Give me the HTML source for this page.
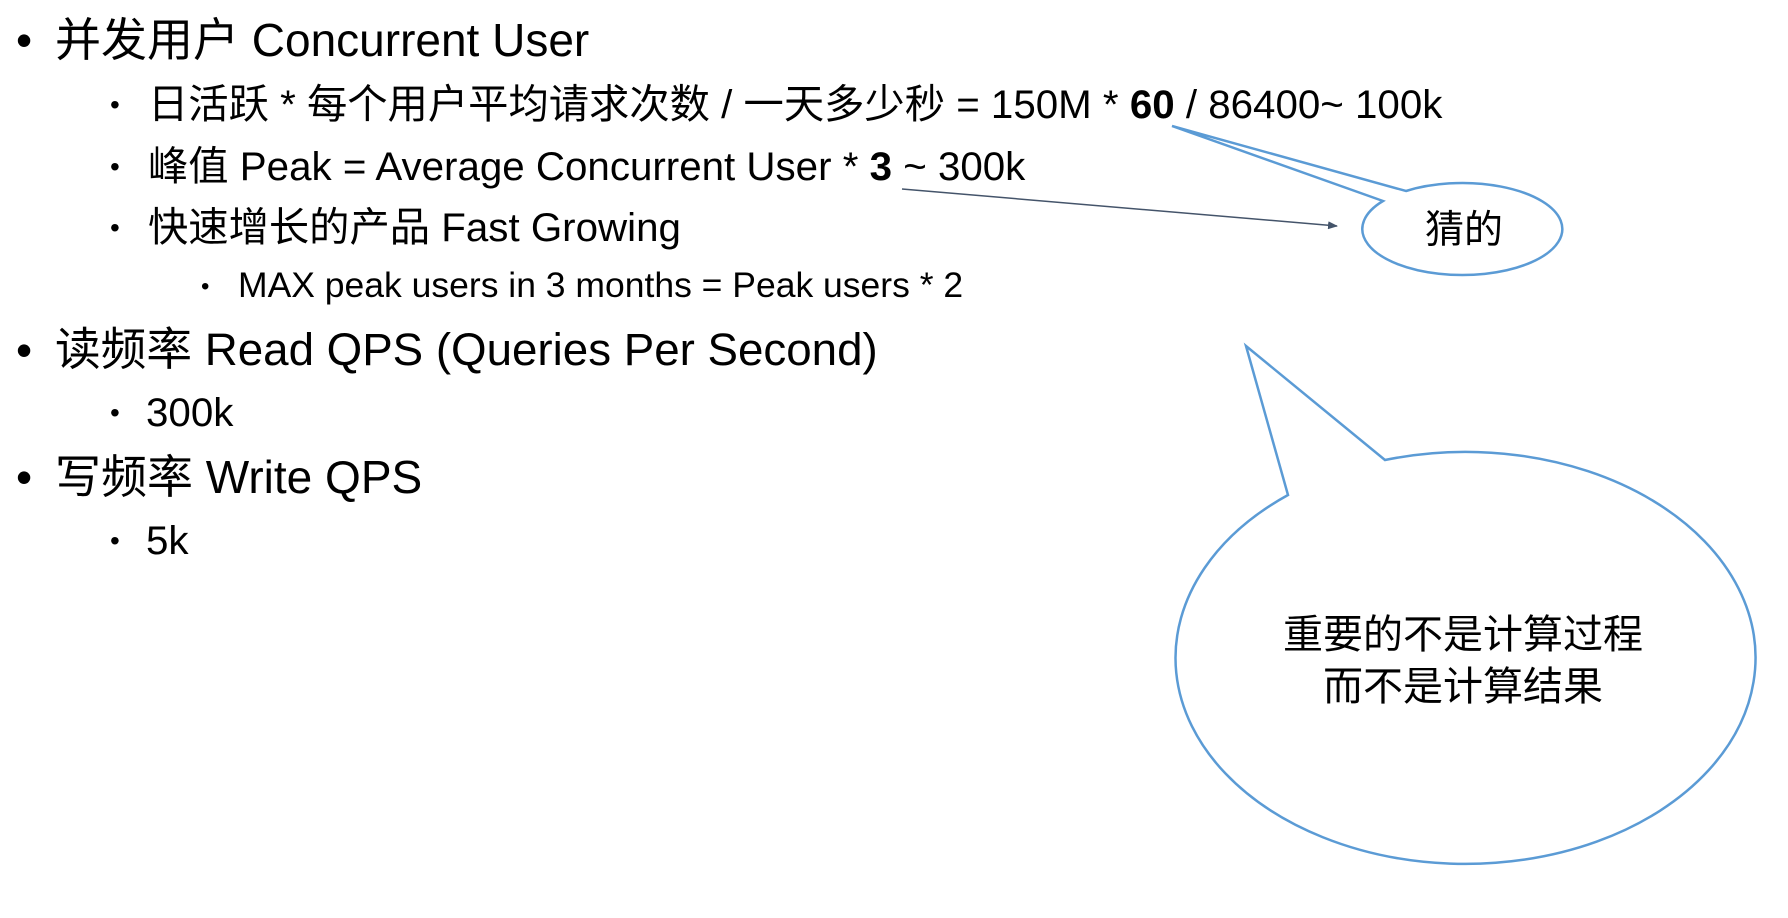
<!DOCTYPE html>
<html><head><meta charset="utf-8"><style>
html,body{margin:0;padding:0;background:#fff;}
body{width:1788px;height:918px;position:relative;overflow:hidden;font-family:"Liberation Sans","Noto Sans CJK SC",sans-serif;color:#000;}
.t{position:absolute;white-space:nowrap;line-height:1;}
.l1{font-size:46px;}
.l2{font-size:40.3px;}
.l3{font-size:35.5px;}
.b{position:absolute;white-space:nowrap;line-height:1;}
</style></head><body>
<div class="b l1" style="left:16px;top:17px;">•</div>
<div class="t l1" style="left:55px;top:17px;">并发用户 Concurrent User</div>

<div class="b" style="left:110px;top:91px;font-size:28px;">•</div>
<div class="t l2" style="left:148px;top:85px;">日活跃 * 每个用户平均请求次数 / 一天多少秒 = 150M * <b>60</b> / 86400~ 100k</div>
<div class="b" style="left:110px;top:153px;font-size:28px;">•</div>
<div class="t l2" style="left:148px;top:147px;">峰值 Peak = Average Concurrent User * <b>3</b> ~ 300k</div>
<div class="b" style="left:110px;top:214px;font-size:28px;">•</div>
<div class="t l2" style="left:148px;top:208px;">快速增长的产品 Fast Growing</div>

<div class="b" style="left:201px;top:275px;font-size:24px;">•</div>
<div class="t l3" style="left:238px;top:268px;">MAX peak users in 3 months = Peak users * 2</div>

<div class="b l1" style="left:16px;top:327px;">•</div>
<div class="t l1" style="left:55px;top:327px;font-size:45.7px;">读频率 Read QPS (Queries Per Second)</div>
<div class="b" style="left:110px;top:399px;font-size:28px;">•</div>
<div class="t l2" style="left:146px;top:393px;">300k</div>
<div class="b l1" style="left:16px;top:454px;">•</div>
<div class="t l1" style="left:55px;top:454px;">写频率 Write QPS</div>
<div class="b" style="left:110px;top:527px;font-size:28px;">•</div>
<div class="t l2" style="left:146px;top:521px;">5k</div>

<svg width="1788" height="918" style="position:absolute;left:0;top:0;">
<defs><marker id="ar" markerWidth="10" markerHeight="8" refX="9" refY="4" orient="auto" markerUnits="userSpaceOnUse"><path d="M0,0 L10,4 L0,8 z" fill="#44546a"/></marker></defs>
<line x1="902" y1="189" x2="1337" y2="226" stroke="#44546a" stroke-width="1.5" marker-end="url(#ar)"/>
<path d="M1406,191 A100,46 0 1 1 1383,201 L1172,126 Z" fill="#fff" stroke="#5b9bd5" stroke-width="2.5" stroke-linejoin="miter"/>
<g transform="translate(-7,0)">
<path d="M1392,460 A290,206 0 1 1 1295,495 L1253,346 Z" fill="#fff" stroke="#5b9bd5" stroke-width="2.5"/>
</g>
<text x="1464" y="243" font-size="39" text-anchor="middle" font-family="Liberation Sans, Noto Sans CJK SC, sans-serif">猜的</text>
<text x="1463" y="648" font-size="40" text-anchor="middle" font-family="Liberation Sans, Noto Sans CJK SC, sans-serif">重要的不是计算过程</text>
<text x="1463" y="700" font-size="40" text-anchor="middle" font-family="Liberation Sans, Noto Sans CJK SC, sans-serif">而不是计算结果</text>
</svg>
</body></html>
